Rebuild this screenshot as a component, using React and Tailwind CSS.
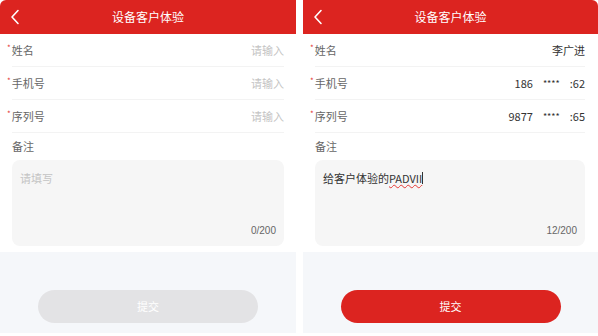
import React from 'react';

const font = { fontFamily: '"Noto Sans CJK SC", "Liberation Sans", sans-serif' };

function Back() {
  return (
    <svg width="10" height="16" viewBox="0 0 10 16" className="absolute left-[10px] top-[9px]">
      <path d="M8 1.5 L2 8 L8 14.5" fill="none" stroke="#fff" strokeWidth="1.6" strokeLinecap="round" strokeLinejoin="round" />
    </svg>
  );
}

function Row({ label, value }) {
  return (
    <div className="h-[33px] flex items-center justify-between border-b border-[#f3f3f3]">
      <div className="flex items-center text-[11px] text-[#666] -ml-[5px]">
        <span className="text-[#e53935] text-[8px] mr-[1px] -mt-[4px]">*</span>
        {label}
      </div>
      {value ? (
        <div className="text-[11px] text-[#333]">{value}</div>
      ) : (
        <div className="text-[11px] text-[#c4c4c4]">请输入</div>
      )}
    </div>
  );
}

function Masked({ head, tail }) {
  return (
    <span className="flex items-center gap-[10px]">
      <span>{head}</span>
      <span className="text-[9px] leading-none">****</span>
      <span>{tail}</span>
    </span>
  );
}

function Panel({ filled, corner, pr }) {
  return (
    <div className="w-full h-[333px] flex flex-col bg-white" style={font}>
      <div className={`relative h-[34px] bg-[#dc2420] flex items-center justify-center shrink-0 ${corner}`}>
        <Back />
        <span className="text-white text-[12px]">设备客户体验</span>
      </div>
      <div className={`pl-[12px] ${pr}`}>
        <Row label="姓名" value={filled ? '李广进' : null} />
        <Row label="手机号" value={filled ? <Masked head="186" tail=":62" /> : null} />
        <Row label="序列号" value={filled ? <Masked head="9877" tail=":65" /> : null} />
      </div>
      <div className={`pl-[12px] ${pr} pt-[3px]`}>
        <div className="text-[11px] text-[#666] h-[20px] leading-[20px]">备注</div>
        <div className="mt-[4px] h-[86px] rounded-[8px] bg-[#f6f6f6] flex flex-col justify-between px-[8px] pt-[10px] pb-[8px]">
          {filled ? (
            <div className="text-[11px] text-[#333] flex items-center">
              给客户体验的<span className="underline decoration-wavy decoration-[#e53935] decoration-1">PADVII</span><span className="w-[1px] h-[12px] bg-[#333]"></span>
            </div>
          ) : (
            <div className="text-[11px] text-[#c4c4c4]">请填写</div>
          )}
          <div className="text-[10px] text-[#666] text-right" style={{ fontFamily: '"Liberation Sans", sans-serif' }}>
            {filled ? '12/200' : '0/200'}
          </div>
        </div>
      </div>
      <div className="flex-1 mt-[6px] bg-[#f5f7fa] flex items-end justify-center pb-[10px]">
        <div className={`w-[220px] h-[33px] rounded-full flex items-center justify-center text-[11px] text-white ${filled ? 'bg-[#dc2420]' : 'bg-[#e3e3e5]'}`}>
          提交
        </div>
      </div>
    </div>
  );
}

export default function App() {
  return (
    <div className="w-[598px] h-[336px] bg-white flex gap-[7px]">
      <div className="w-[296px]"><Panel filled={false} corner="rounded-tl-[6px]" pr="pr-[12px]" /></div>
      <div className="w-[295px]"><Panel filled corner="rounded-tr-[6px]" pr="pr-[13px]" /></div>
    </div>
  );
}
